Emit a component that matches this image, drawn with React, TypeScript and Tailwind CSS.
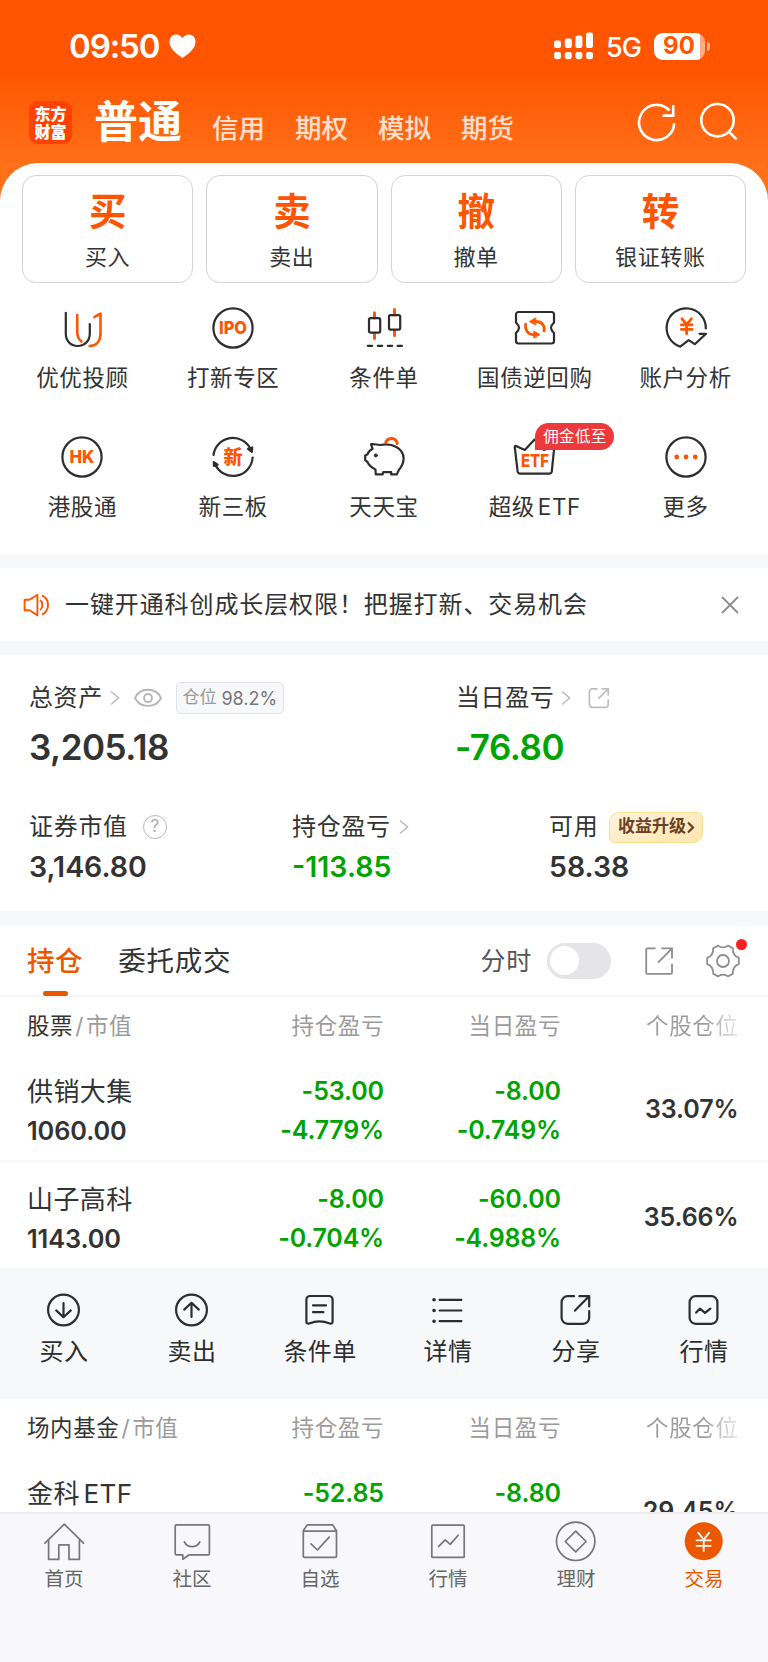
import type { ReactNode } from 'react';

const DARK = '#2d2d2d';
const ORANGE = '#ff5500';

interface IconProps {
  size?: number;
  color?: string;
  width?: number;
  children: ReactNode;
}

function Icon({ size = 42, color = DARK, width = 2.2, children }: IconProps) {
  return (
    <svg
      width={size}
      height={size}
      viewBox={`0 0 ${size} ${size}`}
      fill="none"
      stroke={color}
      strokeWidth={width}
      strokeLinecap="round"
      strokeLinejoin="round"
      className="block shrink-0 overflow-visible"
    >
      {children}
    </svg>
  );
}

function IconText({ y, size, length, children }: { y: number; size: number; length: number; children: string }) {
  return (
    <text
      x="21"
      y={y}
      textAnchor="middle"
      fontSize={size}
      fontWeight="800"
      textLength={length}
      lengthAdjust="spacingAndGlyphs"
      fill={ORANGE}
      stroke="none"
    >
      {children}
    </text>
  );
}

function Chevron() {
  return (
    <svg width="10" height="16" viewBox="0 0 10 16" fill="none" stroke="#bdbdbd" strokeWidth="1.6" className="block shrink-0">
      <path d="M1 1.5 8.5 8 1 14.5" />
    </svg>
  );
}

const mainActions = [
  { glyph: '买', label: '买入' },
  { glyph: '卖', label: '卖出' },
  { glyph: '撤', label: '撤单' },
  { glyph: '转', label: '银证转账' },
];

const shortcuts: { label: string; badge?: string; icon: ReactNode }[] = [
  {
    label: '优优投顾',
    icon: (
      <>
        <path d="M4.8 5.8V26.5C4.8 34 9.5 39 16.6 39S28.8 34 28.8 26.5V17" />
        <path d="M16.2 8V24.5C16.2 29 17.6 32.2 20.4 34.5" stroke={ORANGE} strokeWidth="2.6" />
        <path d="M33.4 10.2 39.5 6.6V26.5C39.5 34 35.5 38.8 28.7 39" stroke={ORANGE} strokeWidth="2.6" />
      </>
    ),
  },
  {
    label: '打新专区',
    icon: (
      <>
        <circle cx="21" cy="21" r="19.6" />
        <IconText y={27.4} size={18} length={28}>IPO</IconText>
      </>
    ),
  },
  {
    label: '条件单',
    icon: (
      <>
        <path d="M11.5 5.8V11M11.5 26.5V31.5M31.5 2.5V8M31.5 23.5V28.5" stroke={ORANGE} strokeWidth="3" />
        <rect x="6" y="11.2" width="11.2" height="14.4" rx="1.5" />
        <rect x="26" y="8.2" width="11.2" height="14.4" rx="1.5" />
        <path d="M4.8 38.8H9.2M14.8 38.8H19.2M24.8 38.8H29.2M34.6 38.8H39" />
      </>
    ),
  },
  {
    label: '国债逆回购',
    icon: (
      <>
        <path d="M4.5 5H37.5A2.5 2.5 0 0 1 40 7.5V15.5C38.5 17 37 18.7 37 20.8S38.5 24.6 40 26V34A2.5 2.5 0 0 1 37.5 36.5H4.5A2.5 2.5 0 0 1 2 34V26C3.5 24.6 5 22.9 5 20.8S3.5 17 2 15.5V7.5A2.5 2.5 0 0 1 4.5 5Z" />
        <path d="M11.6 17.2C10.8 22.2 13.4 27.4 19.5 27.6M21.5 14.5C28 14.5 31.2 18.8 30 24" stroke={ORANGE} strokeWidth="2.8" />
        <path d="M20 24.2 26 27.5 20 31ZM21.5 11 15.3 14.5 21.5 18Z" fill={ORANGE} stroke={ORANGE} strokeWidth="0.8" />
      </>
    ),
  },
  {
    label: '账户分析',
    icon: (
      <>
        <path d="M40.8 21.5A19.6 19.6 0 1 0 15.2 39.6L23.7 33.2 29.8 37.2 41 26.8H34.6" />
        <path d="M17 11.8 21.6 17.6 26.4 11.8M21.6 18V26.8M16.4 17.8H27M16.4 22.4H27" stroke={ORANGE} strokeWidth="2.8" />
      </>
    ),
  },
  {
    label: '港股通',
    icon: (
      <>
        <circle cx="21" cy="21" r="19.6" />
        <IconText y={27.4} size={18} length={25}>HK</IconText>
      </>
    ),
  },
  {
    label: '新三板',
    icon: (
      <>
        <path d="M1.5 19A19.6 19.6 0 0 1 38.8 13.5M40.6 21.5A19.6 19.6 0 0 1 3 28" />
        <path d="M36 12.8 40.2 11.5 39.9 15.8ZM1.8 26.2 2 30 5.6 28.6Z" fill={DARK} />
        <IconText y={27.8} size={19} length={19}>新</IconText>
      </>
    ),
  },
  {
    label: '天天宝',
    icon: (
      <>
        <path d="M8 8.2C12 7.6 14 9.2 17.5 9C29 6.8 40.6 12 40.6 22.5C40.6 27.8 38.4 31 35.8 34L33.8 38.4H28.2V36.2H20.2L19.6 38.4H12.8L12.4 33.4C9.4 31.6 6.2 30.4 4.6 26.2L2.2 24.2V19.4L4.6 18.2C5.4 15.6 7.4 14 9.6 12.8Z" />
        <circle cx="12.8" cy="19.4" r="1.5" fill={DARK} strokeWidth="1" />
        <path d="M22.8 6C25.2 1.4 33 1 34.2 7.4" stroke={ORANGE} strokeWidth="3" />
      </>
    ),
  },
  {
    label: '超级 ETF',
    badge: '佣金低至',
    icon: (
      <>
        <path d="M2 10 10.8 14 20.6 3.6 30 14 38.8 10.4C40 10 40.4 10.6 40.2 11.6L37.8 35.4A2.6 2.6 0 0 1 35.2 37.6H6.2A2.6 2.6 0 0 1 3.6 35.4L.8 11.2C.7 10.2 1.2 9.7 2 10Z" />
        <IconText y={31.4} size={18} length={28}>ETF</IconText>
      </>
    ),
  },
  {
    label: '更多',
    icon: (
      <>
        <circle cx="21" cy="21" r="19.6" />
        <g fill={ORANGE} stroke="none">
          <circle cx="11.7" cy="21" r="2.4" />
          <circle cx="21" cy="21" r="2.4" />
          <circle cx="30.3" cy="21" r="2.4" />
        </g>
      </>
    ),
  },
];

const rowActions: { label: string; icon: ReactNode }[] = [
  {
    label: '买入',
    icon: (
      <>
        <circle cx="17.5" cy="18" r="15.4" />
        <path d="M17.5 11V25M10.2 18.4 17.5 25.2 24.8 18.4" />
      </>
    ),
  },
  {
    label: '卖出',
    icon: (
      <>
        <circle cx="17.5" cy="18" r="15.4" />
        <path d="M17.5 11V25M10.2 17.6 17.5 10.8 24.8 17.6" />
      </>
    ),
  },
  {
    label: '条件单',
    icon: (
      <>
        <path d="M8 4H27A3.6 3.6 0 0 1 30.6 7.6V29.5C30.6 31.3 29.5 32 27.8 31.5C24 30 21.5 29.4 17.5 29.4S11 30 7.2 31.5C5.5 32 4.4 31.3 4.4 29.5V7.6A3.6 3.6 0 0 1 8 4Z" />
        <path d="M11 13.4H24M11 20.2H21.4" />
      </>
    ),
  },
  {
    label: '详情',
    icon: (
      <>
        <path d="M9.6 7.8H31.4M9.6 18.5H31.4M9.6 29.2H31.4" />
        <path d="M4 7.8H4.1M4 18.5H4.1M4 29.2H4.1" strokeWidth="3.6" />
      </>
    ),
  },
  {
    label: '分享',
    icon: (
      <>
        <path d="M16 4.2H9.6A6 6 0 0 0 3.6 10.2V25.8A6 6 0 0 0 9.6 31.8H25.2A6 6 0 0 0 31.2 25.8V19.2" />
        <path d="M21.4 4.2H31.2V14.4M30.6 4.8 17 18.6" />
      </>
    ),
  },
  {
    label: '行情',
    icon: (
      <>
        <rect x="3.6" y="4.2" width="27.8" height="27.6" rx="6" />
        <path d="M10.2 20.6 14 16.6 19 20.8 24.4 16.6" />
      </>
    ),
  },
];

const navItems: { label: string; active?: boolean; icon: ReactNode }[] = [
  {
    label: '首页',
    icon: (
      <>
        <path d="M.9 22.2 20.3 3.2 39.5 22.2" />
        <path d="M4.6 19.6V38.4H14.8V23.9H25V38.4H35.4V19.6" />
      </>
    ),
  },
  {
    label: '社区',
    icon: (
      <>
        <path d="M4.4 3.9H36A1.4 1.4 0 0 1 37.4 5.3V32.4A1.4 1.4 0 0 1 36 33.8H17.2L10.8 38.2V33.8H4.6A1.4 1.4 0 0 1 3.2 32.4V5.3A1.4 1.4 0 0 1 4.4 3.9Z" />
        <path d="M12.4 21C15.5 27.2 24.7 27.2 27.8 21" />
      </>
    ),
  },
  {
    label: '自选',
    icon: (
      <>
        <path d="M3.3 9.8 7.2 3.9H32.6L36.5 9.8V35A1.3 1.3 0 0 1 35.2 36.4H4.6A1.3 1.3 0 0 1 3.3 35ZM3.3 10.2H36.5" />
        <path d="M11 22.8 17.4 29 29.2 16.2" />
      </>
    ),
  },
  {
    label: '行情',
    icon: (
      <>
        <rect x="3.8" y="4.2" width="32.4" height="32.2" rx="1" />
        <path d="M10.5 25.6 17.2 18.8 22.2 23.4 30.2 14.2" />
      </>
    ),
  },
  {
    label: '理财',
    icon: (
      <>
        <circle cx="19.7" cy="20.3" r="19.2" />
        <path d="M19.7 10.2 30.1 20.5 19.7 30.8 9.3 20.5Z" />
      </>
    ),
  },
  {
    label: '交易',
    active: true,
    icon: (
      <>
        <circle cx="19.7" cy="20.3" r="19" fill="#ec5800" stroke="none" />
        <path d="M14.2 11.6 19.7 18.6 25.2 11.6M19.7 19V30M12.6 19.4H26.8M12.6 24.8H26.8" stroke="#fff" strokeWidth="1.8" />
      </>
    ),
  },
];

function StatusBar() {
  return (
    <div className="flex h-[92px] items-center justify-between pl-[69px] pr-[58px] text-white">
      <div className="flex items-center gap-[10px]">
        <span className="text-[33px] font-semibold leading-none tracking-[-1.1px]">09:50</span>
        <svg width="27" height="24" viewBox="0 0 27 24" fill="#fff" className="block">
          <path d="M13.5 24C6 19 .5 14 .5 7.8C.5 3.5 3.4.5 7.2.5C10 .5 12.2 2 13.5 4.3C14.8 2 17 .5 19.8.5C23.6.5 26.5 3.5 26.5 7.8C26.5 14 21 19 13.5 24Z" />
        </svg>
      </div>
      <div className="flex items-center">
        <svg width="39" height="28" viewBox="0 0 39 28" fill="#fff" className="block">
          <rect x="0" y="8.5" width="7" height="7.5" rx="2" />
          <rect x="10.8" y="6.5" width="7" height="9.5" rx="2" />
          <rect x="21.4" y="3.5" width="7" height="12.5" rx="2" />
          <rect x="32" y="0.5" width="7" height="15.5" rx="2" />
          <rect x="0" y="20" width="7" height="7.2" rx="2.4" />
          <rect x="10.8" y="20" width="7" height="7.2" rx="2.4" />
          <rect x="21.4" y="20" width="7" height="7.2" rx="2.4" />
          <rect x="32" y="20" width="7" height="7.2" rx="2.4" />
        </svg>
        <span className="ml-[13px] mt-[3px] text-[27px] font-medium leading-none tracking-[-0.9px]">5G</span>
        <div className="ml-[13px] flex h-[27px] w-[51px] overflow-hidden rounded-[9px] bg-white/50">
          <div className="flex w-[46px] items-center justify-center bg-white pl-1 text-[24px] font-bold leading-none text-[#ff5500]">90</div>
        </div>
        <div className="ml-[2px] h-[9px] w-[3px] rounded-r-full bg-white/50" />
      </div>
    </div>
  );
}

function Header() {
  return (
    <div className="flex h-[71px] pl-[29px] pr-[30px] text-white">
      <div className="mt-[9px] flex h-[43px] w-[43px] flex-col items-center justify-center rounded-[9px] bg-[#ff4200] text-[16px] font-black leading-[18px]">
        <span>东方</span>
        <span>财富</span>
      </div>
      <div className="ml-[22px] mt-[8px] text-[44px] font-bold leading-[44px]">普通</div>
      <div className="ml-[30px] mt-[22px] flex gap-[30px] text-[26.5px] font-medium leading-[28px] text-white/80">
        {['信用', '期权', '模拟', '期货'].map(name => (
          <span key={name}>{name}</span>
        ))}
      </div>
      <div className="ml-auto mt-[10px] flex items-start gap-[24px]">
        <svg width="39" height="40" viewBox="0 0 39 40" fill="none" stroke="#fff" strokeWidth="2.6" className="block">
          <path d="M32.5 8.5A17.6 17.6 0 1 0 37.2 21.4" />
          <path d="M36.2 3V13.6H25.6" />
        </svg>
        <svg width="38" height="40" viewBox="0 0 38 40" fill="none" stroke="#fff" strokeWidth="2.6" className="block">
          <circle cx="17.5" cy="18.2" r="16.2" />
          <path d="M29 29.8 36.6 37.4" />
        </svg>
      </div>
    </div>
  );
}

function ShareSquare({ rounded = false }: { rounded?: boolean }) {
  return rounded ? (
    <svg width="22" height="22" viewBox="0 0 22 22" fill="none" stroke="#bdbdbd" strokeWidth="1.7" className="block">
      <path d="M9.5 1.8H4.2A2.8 2.8 0 0 0 1.4 4.6V17.6A2.8 2.8 0 0 0 4.2 20.4H17.4A2.8 2.8 0 0 0 20.2 17.6V12.6" />
      <path d="M13.4 1.8H20.2V8.6M20 2 10.4 11.6" />
    </svg>
  ) : (
    <svg width="28" height="28" viewBox="0 0 28 28" fill="none" stroke="#8e8e8e" strokeWidth="1.8" className="block">
      <path d="M10.6 1.4H2.2A1 1 0 0 0 1.2 2.4V25.8A1 1 0 0 0 2.2 26.8H26A1 1 0 0 0 27 25.8V16.8" />
      <path d="M16.4 1.4H27V11.4M26.6 1.8 13 15.6" />
    </svg>
  );
}

function Assets() {
  return (
    <section className="h-[256px] shrink-0 pl-[29px] pt-[20px] text-[#333]">
      <div className="grid h-[46px] grid-cols-[427px_1fr] items-center text-[24px] tracking-[0.6px]">
        <div className="flex items-center">
          <span>总资产</span>
          <span className="ml-[7px]"><Chevron /></span>
          <svg width="28" height="20" viewBox="0 0 28 20" fill="none" stroke="#b5b5b5" strokeWidth="1.8" className="ml-[14px] block">
            <path d="M1 10C6 -1 22 -1 27 10C22 20.5 6 20.5 1 10Z" />
            <circle cx="14" cy="10" r="4" />
          </svg>
          <span className="ml-[14px] flex h-[32px] w-[108px] items-center justify-center rounded-[5px] border border-[#e2e3e8] bg-[#f7f8fa] text-[17px] tracking-normal text-[#999]">
            仓位<span className="ml-[5px] text-[18px] text-[#777]">98.2%</span>
          </span>
        </div>
        <div className="flex items-center">
          <span>当日盈亏</span>
          <span className="ml-[7px]"><Chevron /></span>
          <span className="ml-[17px]"><ShareSquare rounded /></span>
        </div>
      </div>
      <div className="mt-[8px] grid h-[36px] grid-cols-[426px_1fr] items-center text-[35px] font-semibold leading-none tracking-[-0.5px]">
        <span>3,205.18</span>
        <span className="text-[#00a400]">-76.80</span>
      </div>
      <div className="mt-[42px] grid h-[40px] grid-cols-[263px_257px_1fr] items-center text-[24px] tracking-[0.7px]">
        <div className="flex items-center">
          <span>证券市值</span>
          <span className="ml-[15px] flex h-[24px] w-[24px] items-center justify-center rounded-full border-[1.5px] border-[#b8b8b8] text-[17px] tracking-normal text-[#a8a8a8]">?</span>
        </div>
        <div className="flex items-center">
          <span>持仓盈亏</span>
          <span className="ml-[8px]"><Chevron /></span>
        </div>
        <div className="flex items-center">
          <span>可用</span>
          <span className="ml-[11px] flex h-[31px] w-[94px] items-center justify-center rounded-bl-[6px] rounded-br-[10px] rounded-tl-[10px] rounded-tr-[6px] border-[1.5px] border-[#fbe08a] bg-gradient-to-br from-[#fff3dc] to-[#ffe6ae] text-[17px] font-bold tracking-normal text-[#6b4024]">
            收益升级
            <svg width="8" height="13" viewBox="0 0 8 13" fill="none" stroke="#6b4024" strokeWidth="2.2" className="ml-px block">
              <path d="M1 1.5 6 6.5 1 11.5" />
            </svg>
          </span>
        </div>
      </div>
      <div className="grid h-[40px] grid-cols-[263px_257px_1fr] items-center text-[28.5px] font-semibold leading-none">
        <span>3,146.80</span>
        <span className="text-[#00a400]">-113.85</span>
        <span>58.38</span>
      </div>
    </section>
  );
}

function Tabs() {
  return (
    <div className="flex h-[71px] shrink-0 border-b-2 border-[#f6f6f8] pl-[27px] pr-[28px] text-[27.5px] text-[#333]">
      <div className="relative flex items-center pt-[3px] font-medium tracking-[0.6px] text-[#ec5800]">
        持仓
        <span className="absolute -bottom-[1px] left-[16px] h-[5px] w-[25px] rounded-full bg-[#ec5800]" />
      </div>
      <div className="ml-[35px] flex items-center pt-[3px] tracking-[0.8px]">委托成交</div>
      <div className="ml-auto flex items-center">
        <span className="pt-[3px] text-[25px] tracking-[0.8px] text-[#555]">分时</span>
        <span className="ml-[15px] flex h-[36px] w-[64px] items-center rounded-full bg-[#e5e5e7] pl-[3px]">
          <span className="h-[29px] w-[29px] rounded-full bg-white" />
        </span>
        <span className="ml-[34px]"><ShareSquare /></span>
        <span className="relative ml-[33px]">
          <svg width="34" height="34" viewBox="0 0 34 34" fill="none" stroke="#8e8e8e" strokeWidth="1.8" strokeLinejoin="round" className="block">
            <path d="M12 1.6C14.8 4 19.2 4 22 1.6L26.8 4.2C26.6 8.6 29 12.4 32.8 13.8V20.2C29 21.6 26.6 25.4 26.8 29.8L22 32.4C19.2 30 14.8 30 12 32.4L7.2 29.8C7.4 25.4 5 21.6 1.2 20.2V13.8C5 12.4 7.4 8.6 7.2 4.2Z" />
            <circle cx="17" cy="17" r="6" />
          </svg>
          <span className="absolute -right-[7px] -top-[5px] h-[11px] w-[11px] rounded-full bg-[#f72323]" />
        </span>
      </div>
    </div>
  );
}

const COLS = 'grid grid-cols-[179.5px_177.5px_177px_177.5px] pl-[27px]';

function TableHead({ title }: { title: string }) {
  return (
    <div className={`${COLS} h-[57px] shrink-0 items-center whitespace-nowrap pt-px text-[22.5px] tracking-[0.6px] text-[#9b9b9b]`}>
      <span>
        <span className="text-[#333]">{title}</span>
        <span className="mx-[2px]">/</span>市值
      </span>
      <span className="text-right">持仓盈亏</span>
      <span className="text-right">当日盈亏</span>
      <span className="bg-gradient-to-r from-[#9b9b9b] from-80% to-[#9b9b9b]/20 bg-clip-text text-right text-transparent">个股仓位</span>
    </div>
  );
}

interface Holding {
  name: string;
  value?: string;
  total: [string, string?];
  today: [string, string?];
  ratio: string;
}

const stocks: Holding[] = [
  { name: '供销大集', value: '1060.00', total: ['-53.00', '-4.779%'], today: ['-8.00', '-0.749%'], ratio: '33.07%' },
  { name: '山子高科', value: '1143.00', total: ['-8.00', '-0.704%'], today: ['-60.00', '-4.988%'], ratio: '35.66%' },
];

const funds: Holding[] = [
  { name: '金科 ETF', total: ['-52.85'], today: ['-8.80'], ratio: '29.45%' },
];

function HoldingRow({ item }: { item: Holding }) {
  return (
    <div className={`${COLS} h-[108px] shrink-0 items-center border-b-2 border-[#f8f8f9] pt-[4px] text-[25px] font-semibold leading-[39px] tracking-[-0.1px] text-[#333]`}>
      <div className="flex h-[82px] flex-col pt-[4px]">
        <span className="text-[26px] font-normal tracking-[0.4px] [word-spacing:-4px]">{item.name}</span>
        <span className="text-[25.3px]">{item.value}</span>
      </div>
      {[item.total, item.today].map(([amount, percent], i) => (
        <div key={i} className="flex h-[82px] flex-col pt-[4px] text-right text-[#00a400]">
          <span>{amount}</span>
          <span className="tracking-[-0.2px]">{percent}</span>
        </div>
      ))}
      <div className="text-right">{item.ratio}</div>
    </div>
  );
}

export default function App() {
  return (
    <div className="flex h-[1662px] w-[768px] flex-col overflow-hidden bg-white font-['Inter','Noto_Sans_CJK_SC',sans-serif]">
      <div className="flex min-h-0 flex-1 flex-col overflow-hidden">
        <div className="shrink-0 bg-[linear-gradient(#ff5500_70px,#ff7019_165px)]">
          <StatusBar />
          <Header />
          <div className="h-[391px] rounded-t-[38px] bg-white pt-[12px]">
            <div className="grid grid-cols-4 gap-[13px] px-[22px]">
              {mainActions.map(({ glyph, label }) => (
                <button key={label} className="flex h-[108px] flex-col items-center rounded-[14px] border border-[#d4d4d4] pt-[17px]">
                  <span className="text-[37.5px] font-bold leading-[38px] text-[#ff5500]">{glyph}</span>
                  <span className="mt-[10px] text-[22px] leading-[32px] tracking-[0.7px] text-[#333]">{label}</span>
                </button>
              ))}
            </div>
            <div className="mt-[24px] grid grid-cols-5 px-[7px]">
              {shortcuts.map(({ label, badge, icon }) => (
                <div key={label} className="relative flex h-[129px] flex-col items-center">
                  <Icon>{icon}</Icon>
                  <span className="mt-[13px] whitespace-nowrap text-[22.5px] leading-[32px] tracking-[0.6px] text-[#333] [word-spacing:-4px]">{label}</span>
                  {badge && (
                    <span className="absolute -top-[13px] left-[76px] flex h-[27px] w-[79px] items-center justify-center rounded-full rounded-bl-none bg-[#ee393c] text-[15.5px] tracking-[0.3px] text-white">
                      {badge}
                    </span>
                  )}
                </div>
              ))}
            </div>
          </div>
        </div>

        <div className="flex h-[101px] shrink-0 items-center border-y-[14.5px] border-[#f7f8fa] pl-[23px] pr-[29px]">
          <svg width="27" height="24" viewBox="0 0 27 24" fill="none" stroke={ORANGE} strokeWidth="1.9" strokeLinejoin="round" className="block">
            <path d="M1.6 6.8H6.4L14.4 1.8V22.2L6.4 17.2H1.6Z" />
            <path d="M17.2 7C20 9 20 15 17.2 17M19 2.4C27 6.4 27 17.6 19 21.6" />
          </svg>
          <span className="ml-[15px] text-[24px] tracking-[0.9px] text-[#333]">一键开通科创成长层权限！把握打新、交易机会</span>
          <svg width="18" height="18" viewBox="0 0 18 18" fill="none" stroke="#8c8c8c" strokeWidth="1.8" className="ml-auto block">
            <path d="M1 1 17 17M17 1 1 17" />
          </svg>
        </div>

        <Assets />
        <div className="h-[15px] shrink-0 bg-[#f7f8fa]" />
        <Tabs />

        <TableHead title="股票" />
        {stocks.map(item => (
          <HoldingRow key={item.name} item={item} />
        ))}
        <div className="grid h-[129px] shrink-0 grid-cols-6 bg-[#f7f8fa] pt-[22px]">
          {rowActions.map(({ label, icon }) => (
            <div key={label} className="flex flex-col items-center">
              <Icon size={36}>{icon}</Icon>
              <span className="mt-[7px] text-[24px] leading-[34px] tracking-[0.4px] text-[#2d2d2d]">{label}</span>
            </div>
          ))}
        </div>
        <TableHead title="场内基金" />
        {funds.map(item => (
          <HoldingRow key={item.name} item={item} />
        ))}
      </div>

      <nav className="grid h-[150px] shrink-0 grid-cols-6 border-t-2 border-[#ececef] bg-[#f8f8fb] pt-[7px]">
        {navItems.map(({ label, active, icon }) => (
          <div key={label} className={`flex flex-col items-center ${active ? 'text-[#ec5800]' : 'text-[#666]'}`}>
            <Icon size={40} color="#777" width={1.7}>{icon}</Icon>
            <span className="mt-[4px] text-[19.5px] leading-[28px]">{label}</span>
          </div>
        ))}
      </nav>
    </div>
  );
}
